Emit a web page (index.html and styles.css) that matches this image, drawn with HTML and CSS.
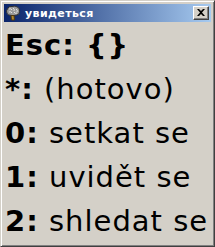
FILE: index.html
```html
<!DOCTYPE html>
<html lang="ru">
<head>
  <meta charset="UTF-8">
  <title>увидеться</title>
  <link rel="stylesheet" href="styles.css">
</head>
<body>
  <div class="window">
    <div class="title-bar">
      <svg class="app-icon" width="16" height="16" viewBox="0 0 16 16">
        <path d="M3 3 Q4 1 7 1.5 Q10 0.5 12.5 2 Q15 3.5 14.5 6.5 Q15 9 12 10 L9 10.5 L7 10.5 Q3 10.5 2 8.5 Q0.5 6 3 3 Z" fill="#9a9a9a" stroke="#303030" stroke-width="1"/>
        <path d="M4 4 Q6 3 7 5 M8 3 Q10 4 9 6 M11 4 Q13 5 12 7 M4 7 Q6 6 7 8 M9 7 Q10 9 12 8" fill="none" stroke="#e0e0e0" stroke-width="1"/>
        <path d="M6 10.5 L6.5 15 L9.5 15 L9 10.5 Z" fill="#b08a30" stroke="#503810" stroke-width="1"/>
      </svg>
      <span class="title">увидеться</span>
      <div class="close-btn">
        <svg width="8" height="7" viewBox="0 0 8 7">
          <path d="M0 0 H2 L4 2 L6 0 H8 L5 3.5 L8 7 H6 L4 5 L2 7 H0 L3 3.5 Z" fill="#000"/>
        </svg>
      </div>
    </div>
    <div class="content">
      <div class="line"><b>Esc: {}</b></div>
      <div class="line"><b>*:</b> (hotovo)</div>
      <div class="line"><b>0:</b> setkat se</div>
      <div class="line"><b>1:</b> uvidět se</div>
      <div class="line"><b>2:</b> shledat se</div>
    </div>
  </div>
</body>
</html>
```

FILE: styles.css
```css
*{
  margin:0;
  padding:0;
  box-sizing: border-box;
}
body{
  background-color: #d4d0c8;
  font-family: "DejaVu Sans", Tahoma, sans-serif;
}
.window{
  width: 215px;
  height: 247px;
  background-color: #d4d0c8;
  border-top: 1px solid #d4d0c8;
  border-left: 1px solid #d4d0c8;
  border-right: 1px solid #404040;
  border-bottom: 1px solid #404040;
  box-shadow: inset 1px 1px 0 #fff, inset -1px -1px 0 #808080;
  padding: 3px 3px 0 3px;
  overflow: hidden;
}
.title-bar{
  display: flex;
  align-items: center;
  height: 18px;
  padding: 0 2px 0 1px;
  background: linear-gradient(to right, #0a246a, #a6caf0);
}
.app-icon{
  flex: none;
}
.title{
  flex: 1;
  margin-left: 4px;
  color: #fff;
  font-weight: bold;
  font-size: 11px;
  letter-spacing: 0.4px;
  white-space: nowrap;
}
.close-btn{
  width: 16px;
  height: 14px;
  display: flex;
  align-items: center;
  justify-content: center;
  background-color: #d4d0c8;
  border-top: 1px solid #fff;
  border-left: 1px solid #fff;
  border-right: 1px solid #404040;
  border-bottom: 1px solid #404040;
  box-shadow: inset -1px -1px 0 #808080;
  padding-right: 1px;
  padding-bottom: 1px;
}
.content{
  padding: 1px 0 0 1px;
}
.line{
  font-size: 29px;
  line-height: 44px;
  letter-spacing: 1px;
  color: #000;
  white-space: nowrap;
}
```
